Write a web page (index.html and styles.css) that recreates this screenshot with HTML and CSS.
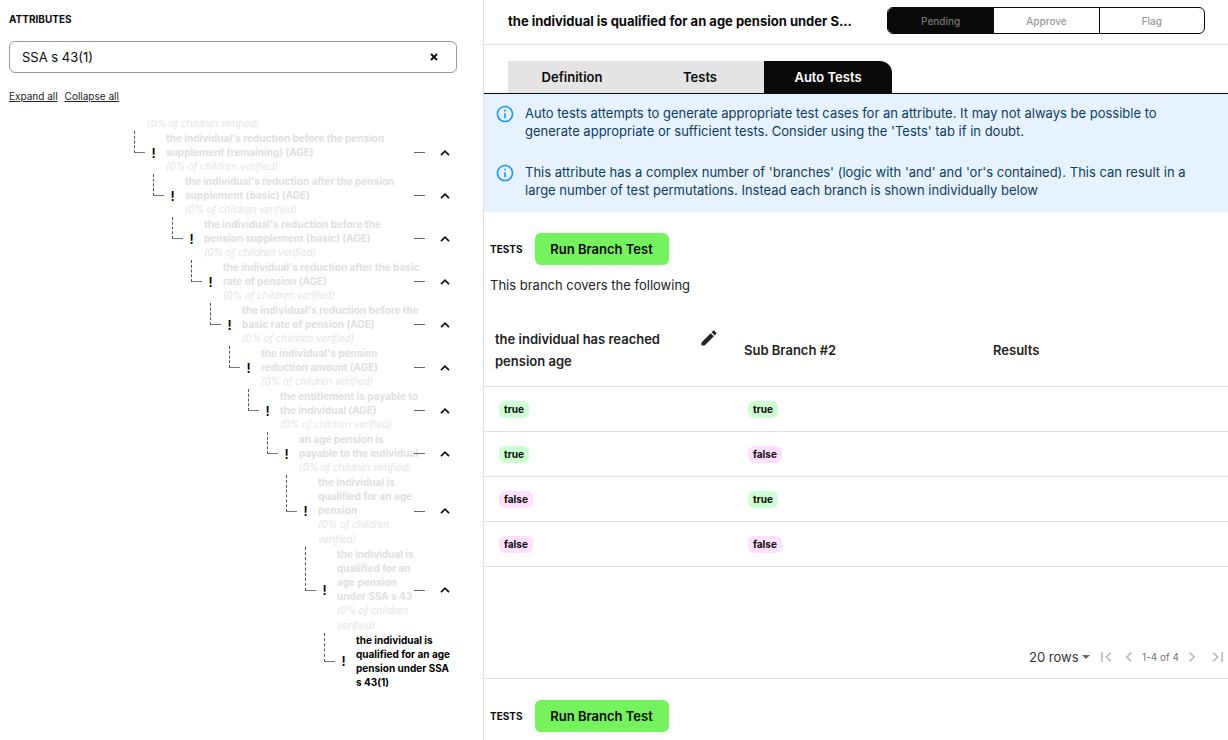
FILE: index.html
```
<!DOCTYPE html>
<html lang="en">
<head>
<meta charset="utf-8">
<title>Attributes</title>
<link rel="stylesheet" href="styles.css">
</head>
<body>
<svg class="defs" aria-hidden="true">
  <symbol id="up" viewBox="0 0 24 24"><path d="M6 15.300 12 9.300l6 6" fill="none" stroke="currentColor" stroke-width="2.600"/></symbol>
  <symbol id="info" viewBox="0 0 24 24"><path fill="currentColor" d="M11 7h2v2h-2zm0 4h2v6h-2zm1-9C6.480 2 2 6.480 2 12s4.480 10 10 10 10-4.480 10-10S17.520 2 12 2zm0 18c-4.410 0-8-3.590-8-8s3.590-8 8-8 8 3.590 8 8-3.590 8-8 8z"/></symbol>
</svg>
<div class="app">
  <aside class="side">
    <div class="side-head">
      <label class="side-title" for="search">ATTRIBUTES</label>
      <div class="search">
        <input class="search-input" id="search" type="text" value="SSA s 43(1)">
        <button class="clear" type="button" aria-label="Clear"><svg class="clear-icon" viewBox="0 0 8 8"><path d="M1 1l6 6M7 1L1 7" stroke="currentColor" stroke-width="1.800"/></svg></button>
      </div>
      <div class="links"><a class="link" href="#">Expand all</a><a class="link" href="#">Collapse all</a></div>
    </div>
    <div class="tree-view">
      <ul class="tree root">
        <li>
          <div class="row"><span class="spacer"></span><span class="node"><em class="note">(0% of children verified)</em></span></div>
          <ul class="tree"><li>
            <div class="row"><span class="elbow"></span><span class="mark">!</span><span class="node"><b class="name">the individual's reduction before the pension<br>supplement (remaining) (AGE)</b><em class="note">(0% of children verified)</em></span><span class="dash"></span><button class="toggle" type="button" aria-label="Collapse"><svg class="up"><use href="#up"/></svg></button></div>
            <ul class="tree"><li>
              <div class="row"><span class="elbow"></span><span class="mark">!</span><span class="node"><b class="name">the individual's reduction after the pension<br>supplement (basic) (AGE)</b><em class="note">(0% of children verified)</em></span><span class="dash"></span><button class="toggle" type="button" aria-label="Collapse"><svg class="up"><use href="#up"/></svg></button></div>
              <ul class="tree"><li>
                <div class="row"><span class="elbow"></span><span class="mark">!</span><span class="node"><b class="name">the individual's reduction before the<br>pension supplement (basic) (AGE)</b><em class="note">(0% of children verified)</em></span><span class="dash"></span><button class="toggle" type="button" aria-label="Collapse"><svg class="up"><use href="#up"/></svg></button></div>
                <ul class="tree"><li>
                  <div class="row"><span class="elbow"></span><span class="mark">!</span><span class="node"><b class="name">the individual's reduction after the basic<br>rate of pension (AGE)</b><em class="note">(0% of children verified)</em></span><span class="dash"></span><button class="toggle" type="button" aria-label="Collapse"><svg class="up"><use href="#up"/></svg></button></div>
                  <ul class="tree"><li>
                    <div class="row"><span class="elbow"></span><span class="mark">!</span><span class="node"><b class="name">the individual's reduction before the<br>basic rate of pension (AGE)</b><em class="note">(0% of children verified)</em></span><span class="dash"></span><button class="toggle" type="button" aria-label="Collapse"><svg class="up"><use href="#up"/></svg></button></div>
                    <ul class="tree"><li>
                      <div class="row"><span class="elbow"></span><span class="mark">!</span><span class="node"><b class="name">the individual's pension<br>reduction amount (AGE)</b><em class="note">(0% of children verified)</em></span><span class="dash"></span><button class="toggle" type="button" aria-label="Collapse"><svg class="up"><use href="#up"/></svg></button></div>
                      <ul class="tree"><li>
                        <div class="row"><span class="elbow"></span><span class="mark">!</span><span class="node"><b class="name">the entitlement is payable to<br>the individual (AGE)</b><em class="note">(0% of children verified)</em></span><span class="dash"></span><button class="toggle" type="button" aria-label="Collapse"><svg class="up"><use href="#up"/></svg></button></div>
                        <ul class="tree"><li>
                          <div class="row"><span class="elbow"></span><span class="mark">!</span><span class="node"><b class="name">an age pension is<br>payable to the individual</b><em class="note">(0% of children verified)</em></span><span class="dash"></span><button class="toggle" type="button" aria-label="Collapse"><svg class="up"><use href="#up"/></svg></button></div>
                          <ul class="tree"><li>
                            <div class="row"><span class="elbow"></span><span class="mark">!</span><span class="node"><b class="name">the individual is<br>qualified for an age<br>pension</b><em class="note">(0% of children<br>verified)</em></span><span class="dash"></span><button class="toggle" type="button" aria-label="Collapse"><svg class="up"><use href="#up"/></svg></button></div>
                            <ul class="tree"><li>
                              <div class="row"><span class="elbow"></span><span class="mark">!</span><span class="node"><b class="name">the individual is<br>qualified for an<br>age pension<br>under SSA s 43</b><em class="note">(0% of children<br>verified)</em></span><span class="dash"></span><button class="toggle" type="button" aria-label="Collapse"><svg class="up"><use href="#up"/></svg></button></div>
                              <ul class="tree"><li>
                                <div class="row current"><span class="elbow"></span><span class="mark">!</span><span class="node"><b class="name">the individual is<br>qualified for an age<br>pension under SSA<br>s 43(1)</b></span></div>
                              </li></ul>
                            </li></ul>
                          </li></ul>
                        </li></ul>
                      </li></ul>
                    </li></ul>
                  </li></ul>
                </li></ul>
              </li></ul>
            </li></ul>
          </li></ul>
        </li>
      </ul>
    </div>
  </aside>

  <main class="main">
    <header class="head">
      <h1 class="title">the individual is qualified for an age pension under S...</h1>
      <div class="status">
        <button class="status-btn active" type="button">Pending</button>
        <button class="status-btn" type="button">Approve</button>
        <button class="status-btn" type="button">Flag</button>
      </div>
    </header>
    <nav class="tabs">
      <button class="tab" type="button">Definition</button>
      <button class="tab" type="button">Tests</button>
      <button class="tab selected" type="button">Auto Tests</button>
    </nav>
    <div class="alert">
      <svg class="info"><use href="#info"/></svg>
      <p class="alert-text">Auto tests attempts to generate appropriate test cases for an attribute. It may not always be possible to<br>generate appropriate or sufficient tests. Consider using the 'Tests' tab if in doubt.</p>
    </div>
    <div class="alert">
      <svg class="info"><use href="#info"/></svg>
      <p class="alert-text">This attribute has a complex number of 'branches' (logic with 'and' and 'or's contained). This can result in a<br>large number of test permutations. Instead each branch is shown individually below</p>
    </div>

    <section class="branch">
      <div class="branch-head"><h2 class="branch-label">TESTS</h2><button class="run" type="button">Run Branch Test</button></div>
      <p class="covers">This branch covers the following</p>
      <table class="table">
        <thead>
          <tr>
            <th class="th"><div class="th-edit"><span>the individual has reached<br>pension age</span><button class="edit" type="button" aria-label="Edit"><svg class="pencil" viewBox="0 0 24 24"><path fill="currentColor" d="M3 17.250V21h3.750L17.810 9.940l-3.750-3.750L3 17.250zM20.710 7.040c.39-.39.39-1.020 0-1.410l-2.340-2.340c-.39-.39-1.020-.39-1.410 0l-1.830 1.830 3.750 3.750 1.830-1.830z"/></svg></button></div></th>
            <th class="th">Sub Branch #2</th>
            <th class="th last">Results</th>
          </tr>
        </thead>
        <tbody>
          <tr><td class="td"><span class="pill yes">true</span></td><td class="td"><span class="pill yes">true</span></td><td class="td"></td></tr>
          <tr><td class="td"><span class="pill yes">true</span></td><td class="td"><span class="pill no">false</span></td><td class="td"></td></tr>
          <tr><td class="td"><span class="pill no">false</span></td><td class="td"><span class="pill yes">true</span></td><td class="td"></td></tr>
          <tr><td class="td"><span class="pill no">false</span></td><td class="td"><span class="pill no">false</span></td><td class="td"></td></tr>
        </tbody>
      </table>
      <div class="pager">
        <select class="rows" aria-label="Rows per page"><option>20 rows</option></select>
        <svg class="caret" viewBox="0 0 8 4"><path d="M0 0h8L4 4z" fill="currentColor"/></svg>
        <button class="page edge" type="button" aria-label="First page"><svg class="page-icon" viewBox="0 0 24 24"><path fill="currentColor" d="M18.410 16.590L13.820 12l4.590-4.590L17 6l-6 6 6 6zM6 6h2v12H6z"/></svg></button>
        <button class="page" type="button" aria-label="Previous page"><svg class="page-icon" viewBox="0 0 24 24"><path fill="currentColor" d="M15.410 7.410L14 6l-6 6 6 6 1.410-1.410L10.830 12z"/></svg></button>
        <span class="range">1-4 of 4</span>
        <button class="page" type="button" aria-label="Next page"><svg class="page-icon" viewBox="0 0 24 24"><path fill="currentColor" d="M10 6L8.590 7.410 13.170 12l-4.580 4.590L10 18l6-6z"/></svg></button>
        <button class="page edge" type="button" aria-label="Last page"><svg class="page-icon" viewBox="0 0 24 24"><path fill="currentColor" d="M5.590 7.410L10.180 12l-4.590 4.590L7 18l6-6-6-6zM16 6h2v12h-2z"/></svg></button>
      </div>
    </section>
    <section class="branch">
      <div class="branch-head"><h2 class="branch-label">TESTS</h2><button class="run" type="button">Run Branch Test</button></div>
    </section>
  </main>
</div>
</body>
</html>
```
FILE: styles.css
```
* { box-sizing: border-box; }
body { margin: 0; color: #0a0a0a; font: 13px/18px Inter, "Open Sans", sans-serif; }
button, input, select { font: inherit; color: inherit; }
button { padding: 0; border: 0; background: none; cursor: pointer; }
h1, h2, p, ul { margin: 0; padding: 0; }
svg { display: block; }
.defs { display: none; }
.app { display: flex; height: 100vh; overflow: hidden; }

.side { display: flex; flex-direction: column; flex: 0 0 484px; min-width: 0; border-right: 1px solid #e0e0e0; }
.side-head { display: flex; flex-direction: column; height: 120px; padding: 10px 26px 0 9px; flex: none; }
.side-title { margin-bottom: 13px; font-size: 10px; font-weight: 700; }
.search { display: flex; align-items: center; height: 32px; padding: 0 16px 0 12px; border: 1px solid #999; border-radius: 6px; }
.search-input { flex: 1; min-width: 0; padding: 0; border: 0; outline: 0; background: none; }
.clear { padding: 2px; }
.clear-icon { width: 8px; height: 8px; }
.links { display: flex; gap: 7px; margin-top: 14px; font-size: 10px; }
.link { color: #222; text-underline-offset: 1px; }

.tree-view { display: flex; flex: 1; flex-direction: column; justify-content: flex-end; min-height: 0; padding: 0 28px 51px 96px; overflow: hidden; }
.tree { padding-left: 19px; list-style: none; }
.root { flex: none; }
.row { display: flex; font-size: 10px; color: #e0e0e0; }
.spacer { flex: none; width: 32px; }
.elbow { display: flex; flex: none; flex-direction: column; width: 11px; }
.elbow::before { content: ""; flex: 1; border-left: 1px dashed #555; border-bottom: 1px solid #777; }
.elbow::after { content: ""; flex: 1; }
.mark { display: flex; flex: none; align-items: center; justify-content: center; width: 17px; margin-right: 4px; color: #000; font-size: 13px; font-weight: 600; }
.node { flex: 1; min-width: 0; white-space: nowrap; }
.name { display: block; font-weight: 700; line-height: 14px; }
.note { display: block; font-weight: 300; line-height: 15px; }
.dash { flex: none; align-self: center; width: 11px; margin-right: 10px; border-top: 1px solid #666; }
.toggle { flex: none; align-self: center; color: #111; }
.up { width: 20px; height: 16px; }
.current { color: #000; }

.main { display: flex; flex: 1; flex-direction: column; min-width: 0; }
.head { display: flex; align-items: center; gap: 15px; padding: 7px 23px 10px 24px; border-bottom: 1px solid #e0e0e0; }
.title { flex: 1; min-width: 0; overflow: hidden; font-size: 13px; font-weight: 700; line-height: 18px; white-space: nowrap; }
.status { display: grid; flex: none; grid-template-columns: repeat(3, 1fr); width: 318px; height: 27px; overflow: hidden; border: 1px solid #0a0a0a; border-radius: 6px; }
.status-btn { color: #999; font-size: 10px; font-weight: 500; }
.status-btn + .status-btn { border-left: 1px solid #0a0a0a; }
.status-btn.active { background: #0a0a0a; color: #777; }
.tabs { display: flex; padding: 16px 24px 0; border-bottom: 1px solid #0a0a0a; }
.tab { width: 128px; height: 32px; background: #e4e4e4; font-weight: 600; }
.tab.selected { border-top-right-radius: 12px; background: #0a0a0a; color: #fff; }
.alert { display: flex; gap: 10px; padding: 10px 11px 13px; background: #e6f3fe; color: #0d3c61; }
.info { flex: none; width: 20px; height: 20px; color: #2196f3; }
.alert-text { white-space: nowrap; }

.branch { padding-top: 21px; }
.branch-head { display: flex; align-items: center; gap: 12px; padding-left: 6px; }
.branch-label { font-size: 10px; font-weight: 700; }
.run { width: 134px; height: 32px; border-radius: 6px; background: #75f35f; box-shadow: 0 1px 8px #0000000f; font-weight: 600; }
.covers { padding: 11px 6px 20px; color: #222; }
.table { width: 100%; border-collapse: collapse; table-layout: fixed; }
.th { width: 249px; height: 72px; padding: 0 11px; border-bottom: 1px solid #e0e0e0; color: #222; font-weight: 600; line-height: 22px; text-align: left; }
.th.last { width: auto; }
.th-edit { display: flex; align-items: flex-start; justify-content: space-between; }
.edit { margin-right: 3px; }
.pencil { width: 20px; height: 20px; }
.td { height: 45px; padding: 0 15px; border-bottom: 1px solid #e0e0e0; }
.pill { display: inline-block; padding: 0 5px; border-radius: 6px; font-size: 10px; font-weight: 700; line-height: 17px; }
.yes { background: #ccffd2; }
.no { background: #ffe1ff; }
.pager { display: flex; align-items: center; justify-content: flex-end; gap: 3px; padding: 80px 0 11px; border-bottom: 1px solid #e0e0e0; color: #bbb; }
.rows { padding: 0; border: 0; appearance: none; background: none; color: #333; }
.caret { width: 8px; height: 4px; color: #666; }
.edge { margin: 0 0 0 3px; }
.page-icon { width: 20px; height: 20px; }
.range { color: #777; font-size: 10px; }
```
